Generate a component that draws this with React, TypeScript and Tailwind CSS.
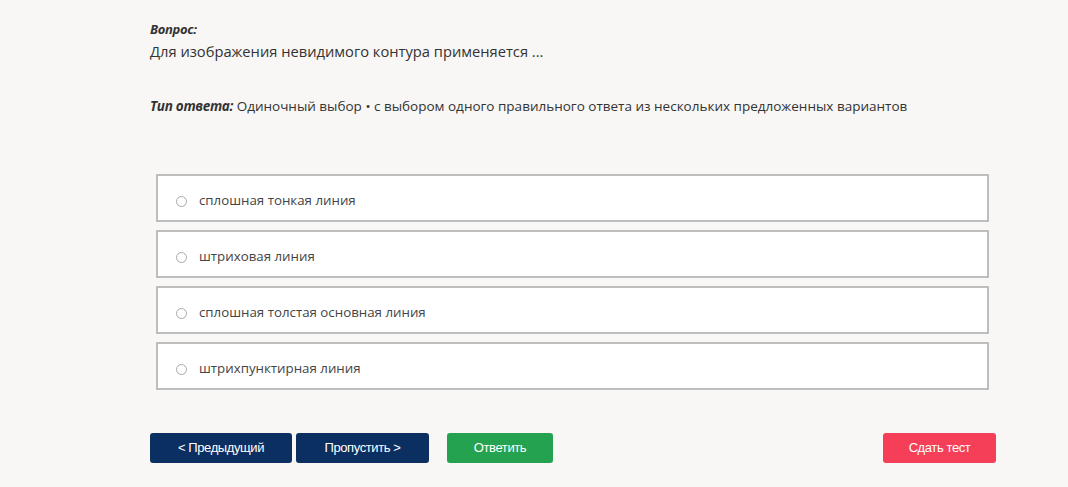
const options = [
  "сплошная тонкая линия",
  "штриховая линия",
  "сплошная толстая основная линия",
  "штрихпунктирная линия",
];

export default function App() {
  return (
    <div className="min-h-[487px] w-full bg-[#f8f7f5] text-[#333]" style={{ fontFamily: '"Open Sans", "Noto Sans", sans-serif' }}>
      <div className="ml-[150px] w-[846px] pt-[19px]">
        <p className="text-[13px] font-bold italic leading-[20px] tracking-[-0.3px] text-[#333]">Вопрос:</p>
        <p className="mt-[1px] text-[14.7px] leading-[22px] text-[#333]">
          Для изображения невидимого контура применяется ...
        </p>

        <p className="mt-[34px] text-[13.5px] leading-[20px] text-[#333]">
          <span className="font-bold italic tracking-[-0.3px]">Тип ответа:</span> Одиночный выбор • с выбором одного
          правильного ответа из нескольких предложенных вариантов
        </p>

        <div className="ml-[6px] mr-[7px] mt-[58px] flex flex-col gap-[8px]">
          {options.map((o) => (
            <label
              key={o}
              className="flex h-[48px] items-center border-2 border-[#bdbdbd] bg-white pl-[18px] pt-[6px]"
            >
              <span className="h-[11px] w-[11px] rounded-full border border-[#a8a8a8] bg-white" />
              <span className="ml-[12px] text-[13.3px] text-[#444]">{o}</span>
            </label>
          ))}
        </div>

        <div
          className="mt-[43px] flex items-center text-[13px] tracking-[-0.4px] text-white"
          style={{ fontFamily: '"Liberation Sans", Arial, sans-serif' }}
        >
          <button className="h-[30px] w-[142px] rounded-[3px] bg-[#0c2f62]">&lt; Предыдущий</button>
          <button className="ml-[4px] h-[30px] w-[133px] rounded-[3px] bg-[#0c2f62]">Пропустить &gt;</button>
          <button className="ml-[18px] h-[30px] w-[106px] rounded-[3px] bg-[#24a24f]">Ответить</button>
          <button className="ml-auto h-[30px] w-[113px] rounded-[3px] bg-[#f53f58]">Сдать тест</button>
        </div>
      </div>
    </div>
  );
}
